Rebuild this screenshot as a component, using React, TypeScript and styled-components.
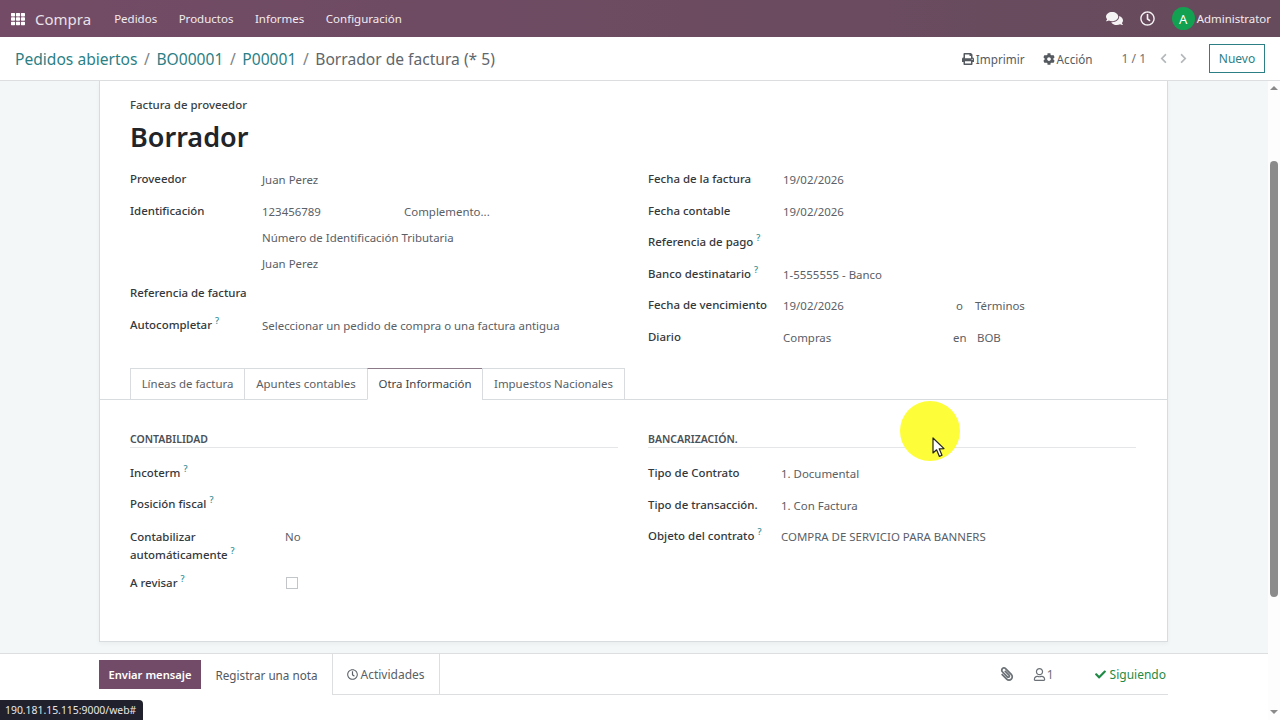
import React from "react";
import styled, { createGlobalStyle } from "styled-components";
import {
  FaCheck,
  FaChevronLeft,
  FaChevronRight,
  FaCog,
  FaComments,
  FaPaperclip,
  FaPrint,
  FaRegClock,
  FaRegUser,
  FaTh,
} from "react-icons/fa";

const Global = createGlobalStyle`
  html, body {
    margin: 0;
    padding: 0;
    background: #fff;
  }
  * {
    box-sizing: border-box;
  }
  body {
    font-family: "Noto Sans", "Open Sans", sans-serif;
    font-size: 11.45px;
    color: #4c5157;
  }
`;

const Page = styled.div`
  position: relative;
  width: 1280px;
  height: 720px;
  overflow: hidden;
  display: flex;
  flex-direction: column;
`;

const Navbar = styled.header`
  flex: 0 0 37px;
  display: flex;
  align-items: center;
  padding: 0 9px 0 11px;
  background: linear-gradient(90deg, #734b66, #664b5c);
  color: #f1ecf0;
`;
const AppsIcon = styled(FaTh)`
  width: 14px;
  height: 14px;
  color: #fff;
`;
const AppName = styled.span`
  font-size: 15px;
  margin: 0 23px 0 10px;
  color: #e9e2e8;
`;
const NavLink = styled.span`
  font-size: 11.5px;
  margin-right: 21.5px;
`;
const NavRight = styled.div`
  margin-left: auto;
  display: flex;
  align-items: center;
`;
const NavIcon = styled.span<{ $size: number }>`
  display: flex;
  font-size: ${(p) => p.$size}px;
  margin-right: 17px;
  color: #f5f2f4;
`;
const Avatar = styled.span`
  width: 23px;
  height: 23px;
  border-radius: 50%;
  background: #12a150;
  color: #fff;
  font-size: 13px;
  display: flex;
  align-items: center;
  justify-content: center;
  margin-right: 2px;
`;

const ControlPanel = styled.div`
  flex: 0 0 44px;
  display: flex;
  align-items: center;
  padding: 0 15px;
  background: #fff;
  border-bottom: 1px solid #dcdee0;
`;
const Crumbs = styled.div`
  font-size: 15.6px;
  color: #5f666c;
  white-space: nowrap;
`;
const Crumb = styled.span`
  color: #2c7f85;
`;
const Slash = styled.span`
  margin: 0 2.5px;
  color: #7d8388;
`;
const PanelActions = styled.div`
  margin-left: auto;
  display: flex;
  align-items: center;
  color: #555b61;
`;
const ActionItem = styled.span`
  display: flex;
  align-items: center;
  gap: 2px;
  margin-right: 18px;
  font-size: 11.7px;
  svg {
    font-size: 12px;
  }
`;
const Pager = styled.span`
  margin: 0 12px 0 11px;
  font-size: 12px;
  color: #6b7176;
`;
const PagerArrow = styled.span`
  display: flex;
  font-size: 11px;
  margin-right: 9px;
  color: #b4b8bb;
`;
const NewButton = styled.button`
  width: 56px;
  height: 29px;
  margin-left: 11px;
  padding: 0;
  background: #fff;
  border: 1px solid #2c7f85;
  color: #2c7f85;
  font: inherit;
  font-size: 12px;
`;

const Body = styled.div`
  flex: 1;
  display: flex;
  min-height: 0;
`;
const Main = styled.div`
  flex: 1;
  min-width: 0;
  display: flex;
  flex-direction: column;
`;
const Content = styled.div`
  flex: 0 0 573px;
  padding: 0 100px 11px 99px;
  background: #f4f7f8;
  border-bottom: 1px solid #dcdee0;
`;
const Sheet = styled.div`
  height: 561px;
  background: #fff;
  border: 1px solid #d9dcdf;
  border-top: none;
  box-shadow: 0 2px 4px rgba(0, 0, 0, 0.04);
`;
const SheetHead = styled.div`
  padding: 15px 30px 0;
`;
const Kicker = styled.div`
  font-weight: 500;
  color: #3a3f44;
  line-height: 17px;
`;
const Title = styled.h1`
  margin: 6px 0 9px;
  font-size: 27px;
  line-height: 36px;
  font-weight: 600;
  color: #212529;
`;
const Columns = styled.div`
  display: grid;
  grid-template-columns: 488px 488px;
  column-gap: 30px;
`;
const Row = styled.div<{ $h: number; $label: number }>`
  height: ${(p) => p.$h}px;
  display: grid;
  grid-template-columns: ${(p) => p.$label}px 1fr;
  align-items: center;
`;
const TallRow = styled(Row)`
  align-items: start;
  padding-top: 10px;
`;
const Label = styled.label`
  font-weight: 500;
  color: #33383d;
  line-height: 17.5px;
  margin-top: -2px;
`;
const Help = styled.sup`
  font-size: 9px;
  line-height: 0;
  color: #2c8d93;
  margin-left: 3px;
  vertical-align: 5px;
`;
const Value = styled.div`
  display: flex;
  margin-top: -1px;
  color: #5a6066;
  white-space: nowrap;
`;
const ValuePart = styled.span<{ $w?: number }>`
  width: ${(p) => (p.$w ? `${p.$w}px` : "auto")};
`;

const Tabs = styled.div`
  display: flex;
  margin-top: 12px;
  padding-left: 31px;
  height: 32px;
  border-bottom: 1px solid #d9dcdf;
`;
const Tab = styled.div<{ $active?: boolean; $w: number }>`
  width: ${(p) => p.$w}px;
  height: 32px;
  display: flex;
  align-items: center;
  justify-content: center;
  padding-bottom: 1px;
  color: ${(p) => (p.$active ? "#3f444a" : "#5a6066")};
  background: #fff;
  border: 1px solid #d9dcdf;
  border-top-color: ${(p) => (p.$active ? "#8d7a89" : "#d9dcdf")};
  border-bottom-color: ${(p) => (p.$active ? "#fff" : "#d9dcdf")};
  margin-left: -1px;
`;
const TabBody = styled.div`
  padding: 31px 30px 0;
`;
const SectionTitle = styled.div`
  height: 17px;
  font-size: 10.5px;
  font-weight: 600;
  line-height: 17px;
  color: #4b5056;
  border-bottom: 1px solid #e4e6e8;
  margin-bottom: 10px;
`;
const CheckBox = styled.span`
  width: 12px;
  height: 12px;
  margin: -3px 0 0 1px;
  background: #fff;
  border: 1px solid #c3c6c9;
`;

const Chatter = styled.div`
  flex: 0 0 41px;
  display: flex;
  align-items: stretch;
  padding-left: 99px;
`;
const SendButton = styled.button`
  align-self: center;
  width: 102px;
  height: 29px;
  padding: 0;
  background: #714b67;
  color: #fff;
  border: none;
  font: inherit;
  font-size: 11.2px;
  font-weight: 600;
`;
const NoteTab = styled.span`
  width: 131px;
  display: flex;
  align-items: center;
  justify-content: center;
  font-size: 11.7px;
  color: #53585e;
`;
const ChatterBar = styled.div`
  width: 836px;
  display: flex;
  align-items: center;
  padding-right: 2px;
  border-bottom: 1px solid #dcdee0;
  color: #5a6066;
`;
const ActivityTab = styled.span`
  width: 108px;
  height: 100%;
  display: flex;
  align-items: center;
  justify-content: center;
  gap: 2px;
  font-size: 12px;
  border-left: 1px solid #dcdee0;
  border-right: 1px solid #dcdee0;
  svg {
    font-size: 11px;
  }
`;
const ChatterRight = styled.div`
  margin-left: auto;
  display: flex;
  align-items: center;
  font-size: 12px;
  color: #6b7176;
`;
const Clip = styled(FaPaperclip)`
  font-size: 14px;
  margin-right: 19px;
  transform: scaleX(-1);
`;
const Followers = styled.span`
  display: flex;
  align-items: center;
  gap: 1px;
  margin-right: 41px;
  svg {
    font-size: 13px;
  }
`;
const Following = styled.span`
  display: flex;
  align-items: center;
  gap: 4px;
  color: #1f8a45;
  svg {
    font-size: 11px;
  }
`;

const ScrollBar = styled.div`
  position: relative;
  flex: 0 0 12px;
  display: flex;
  flex-direction: column;
  align-items: center;
  background: #fdfdfd;
`;
const ScrollArrow = styled.span<{ $down?: boolean }>`
  position: absolute;
  ${(p) => (p.$down ? "bottom: 6px;" : "top: 5px;")}
  width: 0;
  height: 0;
  border-left: 4px solid transparent;
  border-right: 4px solid transparent;
  ${(p) => (p.$down ? "border-top: 4px solid #8a8a8a;" : "border-bottom: 4px solid #8a8a8a;")}
`;
const ScrollThumb = styled.span`
  position: absolute;
  top: 80px;
  width: 8px;
  height: 436px;
  border-radius: 4px;
  background: #8b8b8b;
`;

const StatusTip = styled.div`
  position: absolute;
  left: 0;
  bottom: 0;
  width: 143px;
  height: 20px;
  padding-left: 5px;
  line-height: 20px;
  font-size: 10.4px;
  color: #e6e7ea;
  background: #20212c;
  border-top-right-radius: 4px;
  white-space: nowrap;
`;
const Highlight = styled.div`
  position: absolute;
  left: 900px;
  top: 401px;
  width: 60px;
  height: 60px;
  border-radius: 50%;
  background: #fdfd3a;
`;
const Cursor = styled.svg`
  position: absolute;
  left: 932px;
  top: 437px;
  width: 14px;
  height: 21px;
`;

type Field = {
  label: string;
  help?: boolean;
  h: number;
  value?: string;
  parts?: { text: string; w?: number }[];
};

const renderRow = (f: Field, labelWidth: number) => (
  <Row key={f.label + f.value} $h={f.h} $label={labelWidth}>
    <Label>
      {f.label}
      {f.help && <Help>?</Help>}
    </Label>
    <Value>
      {f.parts
        ? f.parts.map((p) => (
            <ValuePart key={p.text} $w={p.w}>
              {p.text}
            </ValuePart>
          ))
        : f.value}
    </Value>
  </Row>
);

const leftFields: Field[] = [
  { label: "Proveedor", h: 32, value: "Juan Perez" },
  {
    label: "Identificación",
    h: 32,
    parts: [{ text: "123456789", w: 142 }, { text: "Complemento..." }],
  },
  { label: "", h: 20, value: "Número de Identificación Tributaria" },
  { label: "", h: 32, value: "Juan Perez" },
  { label: "Referencia de factura", h: 28 },
  {
    label: "Autocompletar",
    help: true,
    h: 36,
    value: "Seleccionar un pedido de compra o una factura antigua",
  },
];

const rightFields: Field[] = [
  { label: "Fecha de la factura", h: 32, value: "19/02/2026" },
  { label: "Fecha contable", h: 32, value: "19/02/2026" },
  { label: "Referencia de pago", help: true, h: 29 },
  { label: "Banco destinatario", help: true, h: 35, value: "1-5555555 - Banco" },
  {
    label: "Fecha de vencimiento",
    h: 28,
    parts: [
      { text: "19/02/2026", w: 173 },
      { text: "o", w: 19 },
      { text: "Términos" },
    ],
  },
  {
    label: "Diario",
    h: 36,
    parts: [{ text: "Compras", w: 170 }, { text: "en", w: 24 }, { text: "BOB" }],
  },
];

const accountingFields: Field[] = [
  { label: "Incoterm", help: true, h: 31 },
  { label: "Posición fiscal", help: true, h: 31 },
];

const bankFields: Field[] = [
  { label: "Tipo de Contrato", h: 32, value: "1. Documental" },
  { label: "Tipo de transacción.", h: 31, value: "1. Con Factura" },
  {
    label: "Objeto del contrato",
    help: true,
    h: 32,
    value: "COMPRA DE SERVICIO PARA BANNERS",
  },
];

const App = () => {
  return (
    <Page>
      <Global />
      <Navbar>
        <AppsIcon />
        <AppName>Compra</AppName>
        <NavLink>Pedidos</NavLink>
        <NavLink>Productos</NavLink>
        <NavLink>Informes</NavLink>
        <NavLink>Configuración</NavLink>
        <NavRight>
          <NavIcon $size={17}>
            <FaComments />
          </NavIcon>
          <NavIcon $size={15}>
            <FaRegClock />
          </NavIcon>
          <Avatar>A</Avatar>
          <span>Administrator</span>
        </NavRight>
      </Navbar>

      <ControlPanel>
        <Crumbs>
          <Crumb>Pedidos abiertos</Crumb>
          <Slash> / </Slash>
          <Crumb>BO00001</Crumb>
          <Slash> / </Slash>
          <Crumb>P00001</Crumb>
          <Slash> / </Slash>
          Borrador de factura (* 5)
        </Crumbs>
        <PanelActions>
          <ActionItem>
            <FaPrint />
            Imprimir
          </ActionItem>
          <ActionItem>
            <FaCog />
            Acción
          </ActionItem>
          <Pager>1 / 1</Pager>
          <PagerArrow>
            <FaChevronLeft />
          </PagerArrow>
          <PagerArrow>
            <FaChevronRight />
          </PagerArrow>
          <NewButton>Nuevo</NewButton>
        </PanelActions>
      </ControlPanel>

      <Body>
        <Main>
          <Content>
            <Sheet>
              <SheetHead>
                <Kicker>Factura de proveedor</Kicker>
                <Title>Borrador</Title>
                <Columns>
                  <div>{leftFields.map((f) => renderRow(f, 132))}</div>
                  <div>{rightFields.map((f) => renderRow(f, 135))}</div>
                </Columns>
              </SheetHead>
              <Tabs>
                <Tab $w={115}>Líneas de factura</Tab>
                <Tab $w={124}>Apuntes contables</Tab>
                <Tab $w={116} $active>
                  Otra Información
                </Tab>
                <Tab $w={143}>Impuestos Nacionales</Tab>
              </Tabs>
              <TabBody>
                <Columns>
                  <div>
                    <SectionTitle>CONTABILIDAD</SectionTitle>
                    {accountingFields.map((f) => renderRow(f, 155))}
                    <TallRow $h={48} $label={155}>
                      <Label>
                        Contabilizar
                        <br />
                        automáticamente
                        <Help>?</Help>
                      </Label>
                      <Value>No</Value>
                    </TallRow>
                    <Row $h={32} $label={155}>
                      <Label>
                        A revisar
                        <Help>?</Help>
                      </Label>
                      <CheckBox />
                    </Row>
                  </div>
                  <div>
                    <SectionTitle>BANCARIZACIÓN.</SectionTitle>
                    {bankFields.map((f) => renderRow(f, 133))}
                  </div>
                </Columns>
              </TabBody>
            </Sheet>
          </Content>
          <Chatter>
            <SendButton>Enviar mensaje</SendButton>
            <NoteTab>Registrar una nota</NoteTab>
            <ChatterBar>
              <ActivityTab>
                <FaRegClock />
                Actividades
              </ActivityTab>
              <ChatterRight>
                <Clip />
                <Followers>
                  <FaRegUser />1
                </Followers>
                <Following>
                  <FaCheck />
                  Siguiendo
                </Following>
              </ChatterRight>
            </ChatterBar>
          </Chatter>
        </Main>
        <ScrollBar>
          <ScrollArrow />
          <ScrollThumb />
          <ScrollArrow $down />
        </ScrollBar>
      </Body>

      <StatusTip>190.181.15.115:9000/web#</StatusTip>
      <Highlight />
      <Cursor viewBox="0 0 14 21">
        <path
          d="M1 1 L1 16 L4.6 12.8 L7.4 19.4 L10 18.2 L7.2 11.8 L12 11.6 Z"
          fill="#fff"
          stroke="#222"
          strokeWidth="1.2"
          strokeLinejoin="round"
        />
      </Cursor>
    </Page>
  );
};

export default App;
